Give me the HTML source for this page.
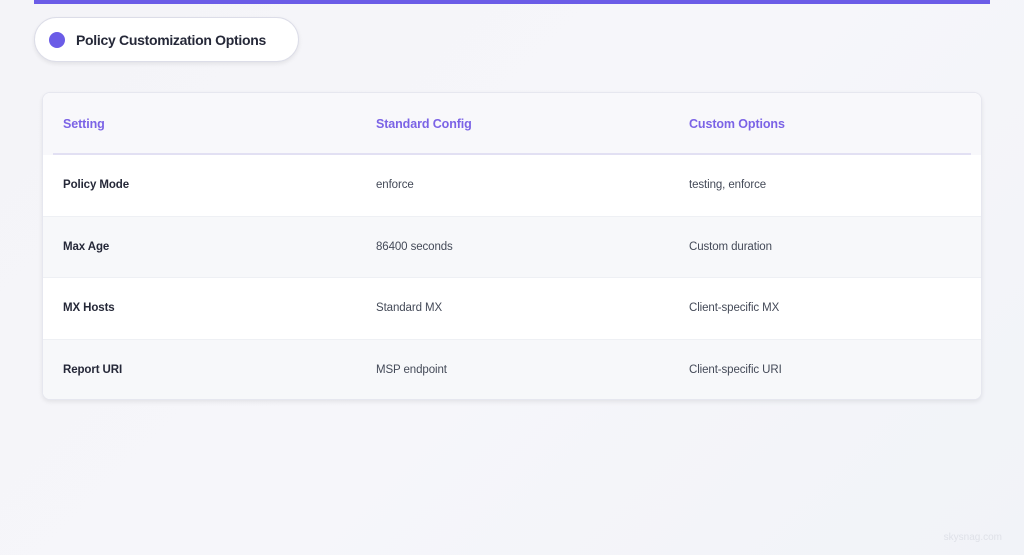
<!DOCTYPE html>
<html><head><meta charset="utf-8"><style>
*{margin:0;padding:0;box-sizing:border-box}
body{width:1024px;height:555px;overflow:hidden;font-family:"Liberation Sans",sans-serif;background:linear-gradient(135deg,#f4f4f8 0%,#f6f6fa 50%,#f1f3f8 100%);position:relative}
.bar{position:absolute;left:34px;top:0;width:956px;height:4px;background:#6b5ce7}
.pill{position:absolute;left:34px;top:17px;width:265px;height:45px;background:#fff;border:1px solid #dcdde8;border-radius:23px;box-shadow:0 2px 4px rgba(0,0,0,.08)}
.pill .dot{position:absolute;left:14px;top:14px;width:16px;height:16px;border-radius:50%;background:#6b5ce7}
.pill span{position:absolute;left:41px;top:14px;font-size:14px;font-weight:bold;color:#252838;letter-spacing:-.3px}
.card{position:absolute;left:42px;top:92px;width:940px;height:308px;background:#fff;border:1px solid #e6e7ef;border-radius:8px;box-shadow:0 2px 5px rgba(0,0,0,.08);overflow:hidden}
.head{height:62px;background:#f8f8fb;position:relative}
.head:after{content:"";position:absolute;left:10px;right:10px;bottom:0;height:2px;background:#e2e0f3}
.row{height:61.5px;position:relative;border-bottom:1px solid #eef0f4}
.row.alt{background:#f7f8fa}
.c{position:absolute;top:50%;transform:translateY(-50%);font-size:11.5px;color:#444a58;letter-spacing:-.1px}
.head .c{font-size:12.5px;font-weight:bold;color:#7b63e6}
.c1{left:20px}.c2{left:333px}.c3{left:646px}
.row .c1{font-weight:bold;color:#252838}
.wm{position:absolute;right:22px;top:532px;font-size:10px;color:#dfe1e8}
</style></head><body>
<div class="bar"></div>
<div class="pill"><div class="dot"></div><span>Policy Customization Options</span></div>
<div class="card">
<div class="head"><div class="c c1">Setting</div><div class="c c2">Standard Config</div><div class="c c3">Custom Options</div></div>
<div class="row"><div class="c c1">Policy Mode</div><div class="c c2">enforce</div><div class="c c3">testing, enforce</div></div>
<div class="row alt"><div class="c c1">Max Age</div><div class="c c2">86400 seconds</div><div class="c c3">Custom duration</div></div>
<div class="row"><div class="c c1">MX Hosts</div><div class="c c2">Standard MX</div><div class="c c3">Client-specific MX</div></div>
<div class="row alt" style="border-bottom:none"><div class="c c1">Report URI</div><div class="c c2">MSP endpoint</div><div class="c c3">Client-specific URI</div></div>
</div>
<div class="wm">skysnag.com</div>
</body></html>
